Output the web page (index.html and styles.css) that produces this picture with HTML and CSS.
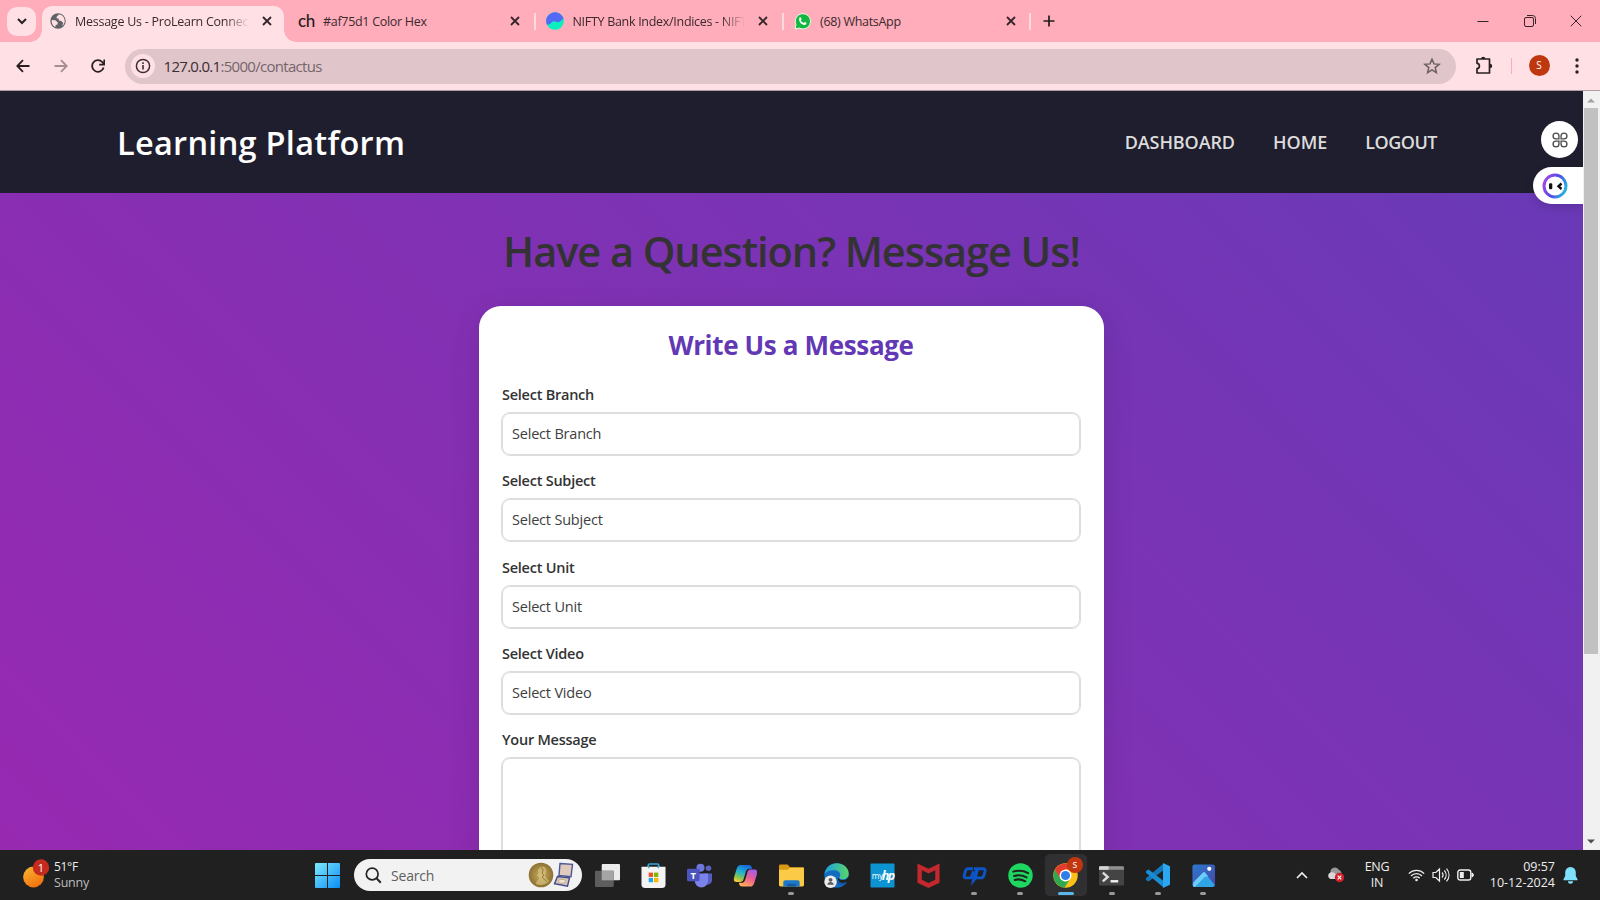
FILE: index.html
```html
<!DOCTYPE html>
<html lang="en">
<head>
<meta charset="utf-8">
<title>Message Us - ProLearn Connect</title>
<link rel="stylesheet" href="styles.css">
</head>
<body>
<div class="screen">
  <header class="tabs">
    <button class="tab-search"><svg width="12" height="12" viewBox="0 0 12 12"><path d="M2 4l4 4 4-4" fill="none" stroke="#2b2023" stroke-width="2"/></svg></button>
    <div class="tab active">
      <svg class="fav" width="16" height="16" viewBox="0 0 16 16"><circle cx="8" cy="8" r="7.7" fill="#5f6368"/><path d="M9 1.5L7 3.2l-.6 2 2.2.4.3 2 2.4.3 2 2.2L12 13c3-2 3.500-6 1.500-9C12.500 2.500 11 1.700 9 1.500zM1.800 7l3.600.3 2.400 2.200-.3 2-1.800.6-.3 2C3 13 1.200 10 1.800 7z" fill="#ffe0e5"/></svg>
      <span class="tab-title t1">Message Us - ProLearn Connect</span>
      <svg class="x" width="10" height="10" viewBox="0 0 10 10"><path d="M1 1l8 8M9 1L1 9"/></svg>
    </div>
    <div class="tab second">
      <span class="fav ch">ch</span>
      <span class="tab-title t2">#af75d1 Color Hex</span>
      <svg class="x" width="10" height="10" viewBox="0 0 10 10"><path d="M1 1l8 8M9 1L1 9"/></svg>
    </div>
    <i class="sep"></i>
    <div class="tab third">
      <svg class="fav" width="18" height="18" viewBox="0 0 18 18"><circle cx="9" cy="9" r="8.800" fill="#08efc0"/><path d="M1 12.800A8.800 8.800 0 1 1 17.500 7C15 7.500 14.500 10 12.500 10.200S9.500 8.800 7.500 9.300 5 12.500 1 12.800z" fill="#5469f5"/></svg>
      <span class="tab-title t3">NIFTY Bank Index/Indices - NIFTY</span>
      <svg class="x" width="10" height="10" viewBox="0 0 10 10"><path d="M1 1l8 8M9 1L1 9"/></svg>
    </div>
    <i class="sep"></i>
    <div class="tab fourth">
      <svg class="fav" width="17" height="17" viewBox="0 0 17 17"><path d="M1 16l1-4.500A7.600 7.600 0 1 1 5.300 15z" fill="#12b83f" stroke="#e8ffe8" stroke-width="1"/><path d="M5.500 4.500c.6-.6 1.200-.4 1.500.3l.6 1.400-.8 1.100c.6 1.300 1.500 2.100 2.800 2.600l1.100-1c.8.3 1.700.7 1.800 1.100 0 1.400-1.500 2.300-2.700 2C7 11.300 4 8 5.500 4.500z" fill="#fff"/></svg>
      <span class="tab-title t4">(68) WhatsApp</span>
      <svg class="x" width="10" height="10" viewBox="0 0 10 10"><path d="M1 1l8 8M9 1L1 9"/></svg>
    </div>
    <i class="sep"></i>
    <svg class="plus" width="12" height="12" viewBox="0 0 12 12"><path d="M6 .5v11M.5 6h11" stroke="#241c1e" stroke-width="1.700"/></svg>
    <div class="win">
      <svg width="12" height="12" viewBox="0 0 12 12"><path d="M.5 6.500h11"/></svg>
      <svg width="12" height="12" viewBox="0 0 12 12"><rect x=".5" y="2.500" width="9" height="9" rx="1.500"/><path d="M3 .5h5.500a3 3 0 0 1 3 3V9"/></svg>
      <svg width="12" height="12" viewBox="0 0 12 12"><path d="M.7.7l10.600 10.600M11.300.7L.7 11.300"/></svg>
    </div>
  </header>

  <div class="toolbar">
    <svg class="nav-ic" width="14" height="14" viewBox="0 0 14 14"><path d="M13.500 7H1.500M7 1.200L1.300 7 7 12.800" stroke="#2a2023"/></svg>
    <svg class="nav-ic" width="14" height="14" viewBox="0 0 14 14"><path d="M.5 7h12M7 1.200L12.700 7 7 12.800" stroke="#a58e93"/></svg>
    <svg class="nav-ic" width="14" height="14" viewBox="0 0 14 14"><path d="M12.600 8.500A5.800 5.800 0 1 1 11.200 3L13 4.800" stroke="#2a2023"/><path d="M13.300.5v5.200H8.200" stroke="#2a2023"/></svg>
    <div class="omnibox">
      <span class="info"><svg width="16" height="16" viewBox="0 0 16 16"><circle cx="8" cy="8" r="6.600" fill="none" stroke="#3a2e31" stroke-width="1.500"/><path d="M8 7v4.500M8 4.200v1.700" stroke="#3a2e31" stroke-width="1.600"/></svg></span>
      <span class="url"><b>127.0.0.1</b>:5000/contactus</span>
      <svg class="star" width="18" height="18" viewBox="0 0 18 18"><path d="M9 2.200l2 4.700 5.100.4-3.900 3.300 1.200 5L9 12.900l-4.400 2.700 1.200-5L1.900 7.300 7 6.900z" fill="none" stroke="#6d5f62" stroke-width="1.500"/></svg>
    </div>
    <svg class="puzzle" width="19" height="19" viewBox="0 0 19 19"><path d="M2 3h12.500v14H2v-4.300c3.200-.4 3.200-5 0-5.400z" fill="none" stroke="#2a2023" stroke-width="1.700" stroke-linejoin="round"/><path d="M6 3a2.200 2.200 0 0 1 4.400 0zM15 7.700a2.200 2.200 0 0 1 0 4.400z" fill="#2a2023"/></svg>
    <i class="tsep"></i>
    <span class="avatar">S</span>
    <svg class="dots" width="4" height="16" viewBox="0 0 4 16" fill="#2a2023"><circle cx="2" cy="2" r="1.700"/><circle cx="2" cy="8" r="1.700"/><circle cx="2" cy="14" r="1.700"/></svg>
  </div>

  <div class="viewport">
    <div class="page">
      <nav class="navbar">
        <div class="brand">Learning Platform</div>
        <div class="links"><a class="l1">DASHBOARD</a><a class="l2">HOME</a><a class="l3">LOGOUT</a></div>
      </nav>
      <h1>Have a Question? Message Us!</h1>
      <form class="card">
        <h2>Write Us a Message</h2>
        <div class="group"><label>Select Branch</label><div class="field">Select Branch</div></div>
        <div class="group"><label>Select Subject</label><div class="field">Select Subject</div></div>
        <div class="group"><label>Select Unit</label><div class="field">Select Unit</div></div>
        <div class="group"><label>Select Video</label><div class="field">Select Video</div></div>
        <div class="group"><label>Your Message</label><div class="field area"></div></div>
      </form>
    </div>
    <div class="float-round"><svg width="16" height="16" viewBox="0 0 18 18" fill="none" stroke="#4a4a4a" stroke-width="1.500"><path d="M7.800 7.800H4.500a3.300 3.300 0 1 1 3.300-3.300zM10.200 7.800h3.300a3.300 3.300 0 1 0-3.300-3.300zM7.800 10.200H4.500a3.300 3.300 0 1 0 3.300 3.300zM10.200 10.200h3.300a3.300 3.300 0 1 1-3.300 3.300z"/></svg></div>
    <div class="float-pill"><svg width="26" height="26" viewBox="0 0 26 26"><defs><linearGradient id="ring" x1="0" y1=".3" x2="1" y2=".7"><stop offset="0" stop-color="#a047e8"/><stop offset=".5" stop-color="#4f4bea"/><stop offset="1" stop-color="#25b9e0"/></linearGradient></defs><circle cx="13" cy="13" r="11" fill="#fff" stroke="url(#ring)" stroke-width="3"/><rect x="7" y="10.300" width="3.300" height="6" rx="1.200" fill="#111"/><path d="M19.500 10.500L16.500 13.300l3 2.700" fill="none" stroke="#111" stroke-width="2.400"/></svg></div>
    <div class="scroll">
      <svg width="8" height="5" viewBox="0 0 8 5"><path d="M0 4.500L4 .5l4 4z" fill="#a3a3a3"/></svg>
      <div class="thumb"></div>
      <svg class="down" width="8" height="5" viewBox="0 0 8 5"><path d="M0 .5l4 4 4-4z" fill="#505050"/></svg>
    </div>
  </div>

  <footer class="taskbar">
    <div class="weather">
      <svg width="27" height="30" viewBox="0 0 27 30"><defs><linearGradient id="sun" x1="0" y1="0" x2=".6" y2="1"><stop offset="0" stop-color="#f7b733"/><stop offset="1" stop-color="#f2720f"/></linearGradient></defs><circle cx="10.500" cy="18" r="10.400" fill="url(#sun)"/><circle cx="18" cy="8.500" r="8.200" fill="#c42b1f"/><text x="18" y="12.500" text-anchor="middle" class="badge-num">1</text></svg>
      <div class="wt"><span>51°F</span><span class="dim">Sunny</span></div>
    </div>
    <svg class="start" width="25" height="25" viewBox="0 0 25 25"><defs><linearGradient id="win" x1="0" y1="0" x2="1" y2="1"><stop offset="0" stop-color="#7eeaff"/><stop offset="1" stop-color="#0a8cf5"/></linearGradient></defs><path d="M0 1a1 1 0 0 1 1-1h11v12H0zM13 0h11a1 1 0 0 1 1 1v11H13zM0 13h12v12H1a1 1 0 0 1-1-1zM13 13h12v11a1 1 0 0 1-1 1H13z" fill="url(#win)"/></svg>
    <div class="search">
      <svg width="17" height="17" viewBox="0 0 17 17"><circle cx="7.200" cy="7" r="5.900" fill="none" stroke="#252525" stroke-width="1.700"/><path d="M11.500 11.300l4.300 4.500" stroke="#252525" stroke-width="2"/></svg>
      <span>Search</span>
      <svg class="prize" width="46" height="26" viewBox="0 0 46 26"><defs><radialGradient id="gold"><stop offset="0" stop-color="#c9ae65"/><stop offset="1" stop-color="#8d7131"/></radialGradient></defs><circle cx="13" cy="13" r="12.300" fill="url(#gold)"/><path d="M8 22c0-3 3-4 3-6.500l-2-2 1.500-2C9 7 12 4 16 5c3 1 3 5 1 8l1 3 3 3c-3 4-9 5-13 3z" fill="#e0cb87" opacity=".6"/><path d="M13 6c3 1 2 3 1 5l1.500 1.500-1 3c1 2 3 2 4 4" fill="none" stroke="#806a2e" stroke-width=".9"/><path d="M32 1.500l12.500.8-1.500 12.500-12-1.300z" fill="#e0cabb" stroke="#4a5797" stroke-width="1.400"/><path d="M29.500 14.500l12 1.300-2 8.400-13-2.400z" fill="#d9c4b2" stroke="#3d4a8f" stroke-width="1.400"/><ellipse cx="34" cy="19.300" rx="3.600" ry="2" fill="#f0e4d5" stroke="#a38f72" stroke-width=".6"/></svg>
    </div>
    <div class="apps">
      <div class="app"><svg viewBox="0 0 26 26"><rect x="7" y="1" width="19" height="17" rx="1" fill="#ececec"/><rect x="0" y="8" width="19.500" height="17" rx="1" fill="#5d5d5d"/><rect x="7" y="8" width="12.500" height="10" fill="#a5a5a5"/></svg></div>
      <div class="app"><svg viewBox="0 0 26 26"><path d="M7.500 6V2.500a1.500 1.500 0 0 1 1.500-1.500h8a1.500 1.500 0 0 1 1.500 1.500V6" fill="none" stroke="#31a9da" stroke-width="1.700"/><path d="M.5 4h25V22a4 4 0 0 1-4 4h-17a4 4 0 0 1-4-4z" fill="#f3f3f3"/><path d="M8 5.500V3.500M18 5.500V3.500" stroke="#31a9da" stroke-width="1.500"/><path d="M8 10h4.500v4.500H8z" fill="#ef5122"/><path d="M13.500 10H18v4.500h-4.500z" fill="#7eb900"/><path d="M8 15.500h4.500V20H8z" fill="#20a3e7"/><path d="M13.500 15.500H18V20h-4.500z" fill="#fbb800"/></svg></div>
      <div class="app"><svg viewBox="0 0 26 26"><circle cx="14" cy="5" r="4.200" fill="#6f77de"/><circle cx="22.300" cy="5.500" r="2.900" fill="#5961c4"/><path d="M17 11h9v7a4.800 4.800 0 0 1-9 2z" fill="#555dc0"/><path d="M8 11h14v7.500a7 7 0 0 1-14 0z" fill="#7b83eb"/><rect x="0" y="6" width="13" height="13" rx="1.200" fill="#4b53bc"/><text x="6.500" y="16.200" text-anchor="middle" class="teams-t">T</text></svg></div>
      <div class="app"><svg viewBox="0 0 26 26"><defs><linearGradient id="c1" x1=".6" y1="0" x2=".2" y2="1"><stop offset="0" stop-color="#176ade"/><stop offset=".45" stop-color="#25b4ce"/><stop offset=".75" stop-color="#87c64b"/><stop offset="1" stop-color="#ffc83d"/></linearGradient><linearGradient id="c2" x1=".8" y1="0" x2=".3" y2="1"><stop offset="0" stop-color="#a15be9"/><stop offset=".5" stop-color="#ed5f91"/><stop offset="1" stop-color="#ffb057"/></linearGradient></defs><path d="M8 2h8.500c2 0 2.700 1.200 3.500 4h-3c-2 0-3 1-3.700 3.200L11 17c-.7 2.200-1.800 2.700-4 2.700H3.500C.5 19.700.5 17 1.500 13.500L4 5.500C5 3 6 2 8 2z" fill="url(#c1)"/><path d="M18 24.500H9.500c-2 0-2.700-1.200-3.500-4h3c2 0 3-1 3.700-3.200L15 9.500c.7-2.200 1.800-2.700 4-2.700h3.500c3 0 3 2.700 2 6.200L22 21c-1 2.500-2 3.500-4 3.500z" fill="url(#c2)"/></svg></div>
      <div class="app run"><svg viewBox="0 0 26 26"><path d="M0 3A1.500 1.500 0 0 1 1.500 1.500H9l2.500 3H25a1 1 0 0 1 1 1V12H0z" fill="#d99a12"/><path d="M0 7h9l2.500-2H25a1 1 0 0 1 1 1v17a1.500 1.500 0 0 1-1.500 1.500h-23A1.500 1.500 0 0 1 0 23z" fill="#fbcb47"/><path d="M4.500 24.500V20a2 2 0 0 1 2-2h13a2 2 0 0 1 2 2v4.500z" fill="#1b78c9"/><path d="M8.500 21.800h9v2.700h-9z" fill="#145a9c"/></svg></div>
      <div class="app"><svg viewBox="0 0 26 26"><defs><linearGradient id="e1"><stop offset="0" stop-color="#1b9de2"/><stop offset="1" stop-color="#59d66a"/></linearGradient></defs><circle cx="13" cy="13" r="12.700" fill="#136cc0"/><path d="M.4 12C1.500 4.500 7 .3 13 .3c7.500 0 12.700 5 12.700 10.700 0 4-3 6-6.200 6-3 0-4.500-1.300-3-3C18 10 14.500 7.500 10.500 7.500 6 7.500 2 9 .4 12z" fill="url(#e1)"/><path d="M16 14c-1.500 2 .5 3.800 3.500 3.800 2.500 0 5-1 6.200-3.800l.3 7-2 .5c-4 1-9-1-9.500-5z" fill="#202020"/><path d="M24 19.500c-4.500 2.500-10 1-11-4-1 5 3 8.500 7 8 2-.8 3.300-2 4-4z" fill="#1259a8"/><circle cx="6.800" cy="19.500" r="6.500" fill="#ececec"/><circle cx="6.800" cy="17.500" r="2" fill="#59595f"/><path d="M3.500 22.500c0-3.500 6.600-3.500 6.600 0z" fill="#59595f"/></svg></div>
      <div class="app"><svg viewBox="0 0 26 26"><rect x=".5" y=".5" width="25" height="25" rx="1" fill="#0c94d2"/><text x="1.800" y="16.500" class="my">my</text><text x="12.300" y="17.500" class="hp">hp</text></svg></div>
      <div class="app"><svg viewBox="0 0 26 26"><path d="M1.500.5L13 6 24.500.5v20L13 26 1.500 20.500z" fill="#c2282d"/><path d="M6 7.500l7 3.500 7-3.500v10L13 20.800l-7-3.300z" fill="#222"/></svg></div>
      <div class="app run"><svg viewBox="0 0 26 26" fill="none" stroke="#0b55c8" stroke-width="3" stroke-linejoin="round"><path d="M11.500 6H6.500Q4.300 6 3.700 8L2.300 13Q1.800 15.500 4 15.500H9.500L12 8.500M12.500 6H22Q24.600 6 24 8.500L22.800 13Q22 15.500 19.500 15.500H14.500"/><path d="M14 6h4l-3.200 11-5.300 7 1-7z" fill="#0b55c8" stroke="none"/></svg></div>
      <div class="app run"><svg viewBox="0 0 26 26"><circle cx="13" cy="13" r="12.700" fill="#1ed760"/><path d="M5.500 9c5-1.500 11-1 15.500 1.500M6.300 13.500c4.500-1.200 9-.7 13 1.500M7 17.600c3.500-1 7.500-.6 11 1.400" fill="none" stroke="#1f2421" stroke-width="2.100" stroke-linecap="round"/></svg></div>
      <div class="app run current"><svg viewBox="0 0 26 26"><circle cx="13" cy="13" r="12.700" fill="#fbc116"/><path d="M2.200 6.700l5.400 9.400L13 19.200l-1.300 6.400A12.700 12.700 0 0 1 2.200 6.700z" fill="#2da94f"/><path d="M13 19.200l5-3L12 25.600h-1z" fill="#2da94f"/><path d="M2 6.700A12.700 12.700 0 0 1 24 6.800H13L7.500 16z" fill="#e33b2e"/><circle cx="13" cy="13" r="6.200" fill="#fff"/><circle cx="13" cy="13" r="4.700" fill="#2f7de8"/></svg><span class="profile">s</span></div>
      <div class="app run"><svg viewBox="0 0 26 26"><rect x="0" y="3.500" width="26" height="20" rx="1.500" fill="#444"/><path d="M0 7V5a1.500 1.500 0 0 1 1.500-1.500h23A1.500 1.500 0 0 1 26 5v2z" fill="#8f8f8f"/><path d="M0 7V5a1.500 1.500 0 0 1 1.500-1.500H10V7z" fill="#d5d5d5"/><path d="M4 10l5 4.500L4 19" fill="none" stroke="#dedede" stroke-width="2.500"/><path d="M12 19h8" stroke="#f2f2f2" stroke-width="2.500"/></svg></div>
      <div class="app run"><svg viewBox="0 0 26 26"><path d="M19 .8v6.700L3.800 19.200 1 17.600v-1.800z" fill="#1377bd"/><path d="M19 25.200v-6.700L3.800 6.800 1 8.400v1.800z" fill="#1b8bd2"/><path d="M18.700 0L26 3.400v19.200L18.700 26z" fill="#2aa7f0"/></svg></div>
      <div class="app run"><svg viewBox="0 0 26 26"><defs><linearGradient id="ph" x1="0" y1="0" x2="1" y2="1"><stop offset="0" stop-color="#2d78cf"/><stop offset="1" stop-color="#4547a8"/></linearGradient></defs><rect x="1.500" y="1.500" width="23.500" height="23.500" rx="2.500" fill="url(#ph)"/><path d="M2 22.500L12 11a2 2 0 0 1 3 0l9.700 12a2.500 2.500 0 0 1-2.200 2H4a2.500 2.500 0 0 1-2-2.500z" fill="#2fa5e6"/><path d="M2.500 20L12 10.300a2 2 0 0 1 3 0l3 3.700-3.500.2L4 25A2.500 2.500 0 0 1 2 22z" fill="#6dcdf7"/><circle cx="19" cy="6" r="2.200" fill="#fff"/></svg></div>
    </div>
    <div class="tray">
      <svg class="chev" width="12" height="8" viewBox="0 0 12 8"><path d="M1 7l5-5 5 5" fill="none" stroke="#eee" stroke-width="1.700"/></svg>
      <svg class="cloud" width="18" height="16" viewBox="0 0 18 16"><path d="M3.500 12a3.500 3.500 0 0 1 0-6.500A4.500 4.500 0 0 1 12 3a3.500 3.500 0 0 1 2 5v4z" fill="#999"/><path d="M3.500 12a3.500 3.500 0 0 1 0-6.500c3-1 5 1 6 3V12z" fill="#d8d8d8"/><circle cx="12.500" cy="10.500" r="4.700" fill="#d32029"/><path d="M10.700 8.700l3.600 3.600M14.300 8.700l-3.600 3.600" stroke="#fff" stroke-width="1.200"/></svg>
      <div class="lang"><span>ENG</span><span>IN</span></div>
      <svg class="wifi" width="17" height="14" viewBox="0 0 17 14" fill="none" stroke="#eee" stroke-width="1.300"><path d="M.8 5.600a10.800 10.800 0 0 1 15.400 0M3 8a7.600 7.600 0 0 1 11 0M5.300 10.300a4.600 4.600 0 0 1 6.400 0"/><circle cx="8.500" cy="12" r="1.300" fill="#eee" stroke="none"/></svg>
      <svg class="spk" width="18" height="16" viewBox="0 0 18 16" fill="none" stroke="#eee" stroke-width="1.200"><path d="M1 5.500h2.800L7.500 2v12l-3.700-3.500H1zM10 5.500c1.300 1.500 1.300 3.500 0 5M12.300 3.500c2.400 2.600 2.400 6.400 0 9M14.500 1.700c3.300 3.800 3.300 8.800 0 12.600"/></svg>
      <svg class="bat" width="17" height="12" viewBox="0 0 17 12"><rect x=".8" y="1" width="13" height="10" rx="2.300" fill="none" stroke="#eee" stroke-width="1.400"/><rect x="2.800" y="3" width="4" height="6" fill="#eee"/><path d="M15 4c1.800.3 1.800 3.700 0 4z" fill="#eee" stroke="#eee"/></svg>
      <div class="clock"><span>09:57</span><span>10-12-2024</span></div>
      <svg class="bell" width="15" height="17" viewBox="0 0 15 17"><path d="M7.500 0a5.200 5.200 0 0 1 5.300 5.200V9l1.700 3.300c.2.500 0 1-.6 1H1.100c-.6 0-.8-.5-.6-1L2.200 9V5.200A5.200 5.200 0 0 1 7.500 0zM5 14.300h5a2.500 2.500 0 0 1-5 0z" fill="#7fe0fb"/></svg>
    </div>
  </footer>
</div>
</body>
</html>
```
FILE: styles.css
```css
* { box-sizing: border-box; }
body { margin: 0; overflow: hidden; font-family: "Open Sans", "Noto Sans", sans-serif; }
svg { display: block; flex: none; }
.screen { width: 1600px; height: 900px; display: flex; flex-direction: column; overflow: hidden; }

/* Browser tab strip */
.tabs { height: 42px; flex: none; background: #ffadbb; display: flex; align-items: center; padding-left: 7px; }
.tab-search { width: 29px; height: 29px; border: 0; border-radius: 10px; background: #ffe0e5; padding: 0; display: grid; place-items: center; margin-right: 6px; flex: none; }
.tab { display: flex; align-items: center; height: 36px; flex: none; }
.tab.active { position: relative; width: 242px; background: #ffe0e5; border-radius: 10px 10px 0 0; align-self: flex-end; padding: 0 12px 6px 8px; }
.tab.active::before, .tab.active::after { content: ""; position: absolute; bottom: 0; width: 12px; height: 12px; }
.tab.active::before { left: -12px; background: radial-gradient(circle at 0 0, transparent 11.5px, #ffe0e5 12px); }
.tab.active::after { right: -12px; background: radial-gradient(circle at 100% 0, transparent 11.5px, #ffe0e5 12px); }
.tab.second { width: 250px; padding: 0 14px 0 14px; }
.tab.third { width: 246px; padding: 0 14px 0 9.5px; }
.tab.fourth { width: 245px; padding: 0 13px 0 10px; }
.fav { flex: none; margin-right: 9px; }
.fav.ch { width: 17px; font: 500 17px/20px Lato, sans-serif; letter-spacing: -.5px; color: #241c1e; margin-right: 8px; }
.tab-title { flex: 1; min-width: 0; overflow: hidden; white-space: nowrap; font-size: 12.5px; line-height: 18px; padding-top: 1px; color: #3a2a2e; letter-spacing: -.3px; margin-right: 13px; }
.t1 { letter-spacing: -.25px; }
.t1, .t3 { -webkit-mask-image: linear-gradient(90deg, #000 calc(100% - 24px), transparent); mask-image: linear-gradient(90deg, #000 calc(100% - 24px), transparent); }
.x { stroke: #33262a; stroke-width: 1.8; }
.sep { width: 2px; height: 17px; background: #ffdbe1; flex: none; }
.plus { margin-left: 12px; }
.win { margin-left: auto; margin-right: 18px; display: flex; gap: 34.5px; fill: none; stroke: #35252a; stroke-width: 1; }

/* Address bar */
.toolbar { height: 49px; flex: none; background: #ffe0e5; border-bottom: 1px solid #b09da4; display: flex; align-items: center; padding-left: 16px; }
.nav-ic { fill: none; stroke-width: 1.8; margin-right: 23.5px; }
.omnibox { width: 1331px; height: 35px; border-radius: 18px; background: #e0c5ca; display: flex; align-items: center; padding: 0 15px 0 6px; margin-left: -4px; flex: none; }
.info { width: 24px; height: 24px; border-radius: 50%; background: #ffe0e5; display: grid; place-items: center; flex: none; margin-right: 9px; }
.url { font-size: 15px; letter-spacing: -.7px; color: #75666a; }
.url b { font-weight: 400; color: #3a2e31; }
.star { margin-left: auto; }
.puzzle { margin-left: 19px; margin-bottom: 2px; }
.tsep { width: 1px; height: 16px; background: #ffabb9; margin-left: 17px; }
.avatar { width: 21px; height: 21px; border-radius: 50%; background: #be370e; color: #fff; font: 10px/21px "Open Sans", sans-serif; text-align: center; margin-left: 17px; margin-bottom: 1px; }
.dots { margin-left: 25px; margin-bottom: 1px; }

/* Web page */
.viewport { position: relative; height: 759px; flex: none; display: flex; align-items: flex-start; overflow: hidden; }
.page { width: 1583px; height: 1008px; background: linear-gradient(45deg, #9c27b0, #673ab7); flex: none; }
.navbar { height: 102px; background: #1f1e2e; display: flex; align-items: center; justify-content: space-between; padding: 0 146px 0 117px; }
.brand { font-size: 32.5px; font-weight: 600; color: #fff; letter-spacing: .28px; white-space: nowrap; padding-top: 1px; }
.links { display: flex; gap: 38px; color: #dcdcdc; font-size: 18px; font-weight: 600; }
.l1 { letter-spacing: -.1px; }
.l3 { letter-spacing: -.5px; }
h1 { margin: 30px 0 0; height: 57px; font-size: 41.5px; line-height: 57px; font-weight: 600; color: #333; text-align: center; white-space: nowrap; letter-spacing: -1.05px; }
.card { width: 625px; height: 640px; margin: 26px auto 0; padding: 23px 24px 0 23px; background: #fff; border-radius: 22px; box-shadow: 0 8px 30px rgba(0,0,0,.12); }
h2 { margin: 0; height: 34px; font-size: 26px; line-height: 33px; font-weight: 700; color: #6238b5; text-align: center; white-space: nowrap; letter-spacing: -.35px; }
.group { height: 86.25px; }
.group:nth-of-type(1) { margin-top: 20px; }
label { display: block; height: 30px; font-size: 14.5px; line-height: 24px; font-weight: 600; color: #333; letter-spacing: -.25px; }
.field { height: 42px; border: 1.5px solid #ddd; outline: .4px solid #ddd; border-radius: 8px; font-size: 14.5px; line-height: 40px; padding-left: 9px; color: #3e3e3e; letter-spacing: -.2px; }
.area { height: 150px; }

/* Side widgets and scrollbar */
.float-round { position: absolute; left: 1541px; top: 30px; width: 37px; height: 37px; border-radius: 50%; background: #fff; display: grid; place-items: center; }
.float-pill { position: absolute; left: 1533px; top: 76px; width: 50px; height: 37px; border-radius: 19px 0 0 19px; background: #fff; display: flex; align-items: center; padding-left: 9px; box-shadow: 0 3px 10px rgba(0,0,0,.15); }
.scroll { position: relative; width: 17px; height: 759px; background: #f1f1f1; display: flex; flex-direction: column; align-items: center; padding: 7px 1px 6px 0; }
.thumb { width: 14px; height: 546px; background: #c1c1c1; margin-top: 5px; flex: none; }
.down { margin-top: auto; }

/* Taskbar */
.taskbar { height: 50px; flex: none; background: #202020; display: flex; align-items: center; color: #eee; font-size: 12px; }
.weather { display: flex; align-items: center; width: 314.5px; padding-left: 23px; gap: 4px; }
.weather svg { margin-bottom: 3px; }
.badge-num { font-size: 11px; fill: #fff; }
.wt { display: flex; flex-direction: column; line-height: 16.5px; font-size: 12px; letter-spacing: -.3px; }
.dim { color: #bdbdbd; font-size: 12.5px; letter-spacing: -.2px; }
.search { margin-left: 14.5px; width: 228px; height: 32px; border-radius: 16px; background: #f2f2f2; display: flex; align-items: center; padding: 0 8px 0 11px; color: #5e5e5e; font-size: 14px; }
.search span { margin-left: 9px; letter-spacing: -.2px; }
.prize { margin-left: auto; }
.apps { display: flex; margin-left: 3px; }
.app { width: 45.8px; height: 50px; position: relative; display: grid; place-items: center; }
.app svg { width: 25px; height: 25px; }
.app.run::after { content: ""; position: absolute; left: 20px; bottom: 5px; width: 6px; height: 3px; border-radius: 2px; background: #9a9a9a; }
.app.current::before { content: ""; position: absolute; left: 2px; top: 4px; width: 42px; height: 42px; border-radius: 5px; background: #303033; }
.app.current svg { position: relative; }
.app.current::after { left: 15px; width: 16px; background: #5bb5e8; }
.profile { position: absolute; left: 24px; top: 7px; width: 16px; height: 16px; border-radius: 50%; background: #c2370f; font: 10px/15px "Open Sans", sans-serif; text-align: center; color: #fff; }
.teams-t { font: 700 10px "Open Sans", sans-serif; fill: #fff; }
.my { font: 8.5px "Open Sans", sans-serif; fill: #fff; letter-spacing: -.4px; }
.hp { font: italic 700 13px "Open Sans", sans-serif; fill: #fff; letter-spacing: -1.6px; }
.tray { margin-left: auto; display: flex; align-items: center; padding-right: 22px; }
.cloud { margin-left: 19px; }
.lang { display: flex; flex-direction: column; align-items: center; width: 30px; margin-left: 17px; line-height: 16.5px; font-size: 12.5px; letter-spacing: -.3px; }
.wifi { margin-left: 16px; }
.spk { margin-left: 7px; }
.bat { margin-left: 7px; }
.clock { display: flex; flex-direction: column; align-items: flex-end; width: 73px; margin-left: 8px; line-height: 16.5px; font-size: 12.5px; letter-spacing: 0; white-space: nowrap; }
.bell { margin-left: 8px; }
```
